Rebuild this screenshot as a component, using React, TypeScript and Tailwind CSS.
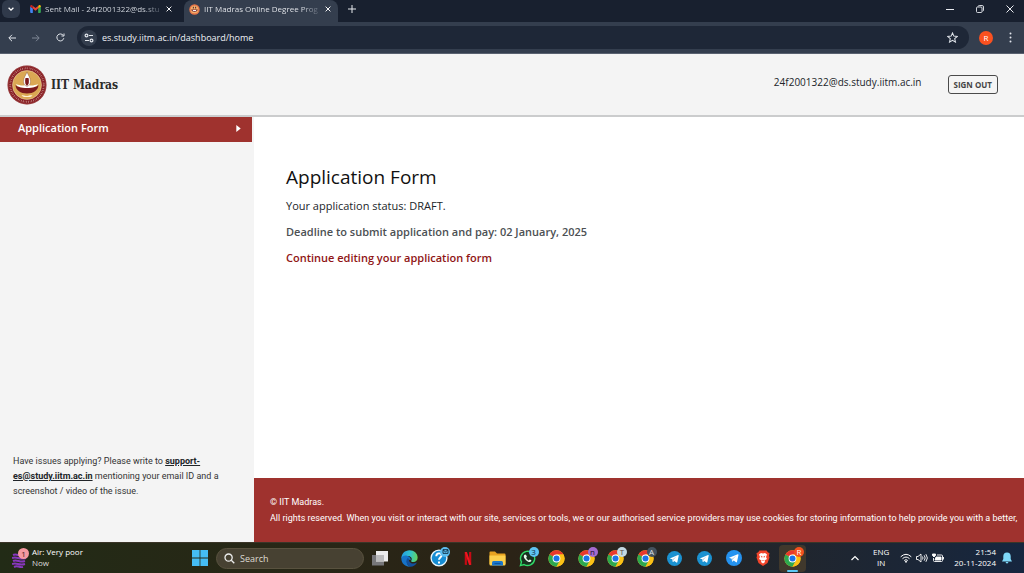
import React from "react";

function GmailIcon() {
  return (
    <svg viewBox="0 0 24 18" className="h-2 w-[11px] shrink-0" aria-hidden="true">
      <path fill="#4285f4" d="M0 3v13a2 2 0 0 0 2 2h4V8z" />
      <path fill="#34a853" d="M18 18h4a2 2 0 0 0 2-2V3l-6 5z" />
      <path fill="#fbbc04" d="M18 2v6l6-4V3c0-3-3-4-5-2z" />
      <path fill="#ea4335" d="M6 8V2l6 5 6-5v6l-6 5z" />
      <path fill="#c5221f" d="M0 3v1l6 4V2L5 1C3-1 0 0 0 3z" />
    </svg>
  );
}

function SealFavicon() {
  return (
    <svg viewBox="0 0 20 20" className="h-[11px] w-[11px] shrink-0" aria-hidden="true">
      <circle cx="10" cy="10" r="9.5" fill="#e8764a" />
      <circle cx="10" cy="10" r="7" fill="#f4b26a" />
      <path d="M4 10h12c-1 6-11 6-12 0z" fill="#6c2130" />
      <path d="M7 5h2v3H7zM11 5h2v3h-2z" fill="#5a3038" />
      <path d="M7 11h6v2H7z" fill="#fff" />
    </svg>
  );
}

function CloseIcon({ className }: { className: string }) {
  return (
    <svg viewBox="0 0 10 10" className={className} fill="none" stroke="currentColor" aria-hidden="true">
      <path d="M1 1l8 8M9 1L1 9" strokeWidth="1.6" />
    </svg>
  );
}

function IitSeal() {
  return (
    <svg viewBox="0 0 80 80" className="h-10 w-10 shrink-0" role="img" aria-label="IIT Madras seal">
      <circle cx="40" cy="40" r="39" fill="#861a20" />
      <circle cx="40" cy="40" r="38" fill="none" stroke="#c99a90" strokeWidth="0.6" />
      <circle cx="40" cy="40" r="33.5" fill="none" stroke="#e3c4bd" strokeWidth="4" strokeDasharray="1.6 1.8 1 2 2 2.1" opacity="0.6" />
      <circle cx="40" cy="40" r="29" fill="#dba854" stroke="#efdcb8" strokeWidth="1" />
      <path d="M17 40c2 2 5 4 9 4 9 2 19 2 28 0 4 0 7-2 9-4-1 11-10 17-23 17S18 51 17 40z" fill="#7c1a1d" />
      <path d="M18 38c7 3 14 4 18 2l4 2 4-2c4 2 11 1 18-2-2 6-12 8-22 8s-20-2-22-8z" fill="#fff" />
      <path d="M40 14c2 6 7 11 7 19 0 5-3 9-7 10-4-1-7-5-7-10 0-8 5-13 7-19z" fill="#fff" stroke="#7d4a32" strokeWidth="0.8" />
      <path d="M37 26h6c1 4 1 9 0 12l-3 4-3-4c-1-3-1-8 0-12z" fill="#7c1a1d" />
      <path d="M29 61c5-2 8 2 12 1s5-2 10-1c-3 4-7 3-11 3s-7 1-11-3z" fill="#fff3d6" />
    </svg>
  );
}

function ChromeIcon() {
  return (
    <svg viewBox="0 0 48 48" className="h-[17px] w-[17px]" aria-hidden="true">
      <circle cx="24" cy="24" r="23" fill="#fbc116" />
      <path d="M24 24L4.100 12.500A23 23 0 0 1 43.900 12.500H24z" fill="#e8392d" />
      <path d="M4.100 12.500A23 23 0 0 0 24 47l10-17.500L24 24z" fill="#2da84f" />
      <path d="M24 13h19.900A23 23 0 0 1 24 47l9.500-17z" fill="#fbc116" />
      <circle cx="24" cy="24" r="11" fill="#fff" />
      <circle cx="24" cy="24" r="8.500" fill="#1a73e8" />
    </svg>
  );
}

function TelegramIcon({ bright = false }: { bright?: boolean }) {
  return (
    <svg viewBox="0 0 24 24" className={bright ? "h-4 w-4" : "h-[15px] w-[15px]"} aria-hidden="true">
      <circle cx="12" cy="12" r="12" fill={bright ? "#2593f0" : "#1b92d1"} />
      <path d="M4.500 11.800l13.200-5.300c.7-.2 1.200.2 1 1.100l-2.200 10.200c-.2.800-.8 1-1.400.6l-3.500-2.600-1.700 1.600c-.4.400-.8.200-.8-.3l-.6-4-4-1.300z" fill="#fff" />
      <path d="M9 13l6.500-4.500-5.200 5.500-.8 3z" fill="#a9cbe3" />
    </svg>
  );
}

function EdgeIcon() {
  return (
    <svg viewBox="0 0 48 48" className="h-[17px] w-[17px]" aria-hidden="true">
      <defs>
        <linearGradient id="edge-top" x1="0" x2="1" y1="0.4" y2="0.5">
          <stop offset="0" stopColor="#249ce4" />
          <stop offset="0.55" stopColor="#32c3c9" />
          <stop offset="1" stopColor="#66d35b" />
        </linearGradient>
      </defs>
      <path d="M1 24C1 11 11 1 24 1s23 9 23 20c0 8-5 13-12 13-5 0-7-2-6-4 4-6-1-13-9-13C10 17 2 23 1 24z" fill="url(#edge-top)" />
      <path d="M1 24c1-6 9-10 16-8 8 2 12 8 10 13-8-5-12 1-10 8 1 5 5 9 9 10C12 48 1 38 1 24z" fill="#1673c8" />
      <path d="M20 22c-7 5-7 19 6 25 9 0 16-5 19-12-9 6-20 3-22-4-1-4-1-6-3-9z" fill="#114f9d" />
    </svg>
  );
}

function HelpIcon() {
  return (
    <svg viewBox="0 0 20 20" className="h-[18px] w-[18px]" aria-hidden="true">
      <circle cx="10" cy="10" r="8.800" fill="#168dd4" stroke="#e9f6fc" strokeWidth="1.500" />
      <path d="M7 8c0-4 6-4 6-1 0 2-3 2.500-3 5M10 14v2" fill="none" stroke="#fff" strokeWidth="2.200" />
    </svg>
  );
}

function MailGlyph() {
  return (
    <svg viewBox="0 0 10 8" className="h-[5px] w-[7px]" fill="none" stroke="#102c40" strokeWidth="1.400" aria-hidden="true">
      <path d="M1 1h8v6H1zM1 1.500l4 3 4-3" />
    </svg>
  );
}

function FolderIcon() {
  return (
    <svg viewBox="0 0 34 30" className="h-[15px] w-[17px]" aria-hidden="true">
      <path d="M1 3a2 2 0 0 1 2-2h9l4 4h15a2 2 0 0 1 2 2v19H1z" fill="#e8a321" />
      <path d="M1 9h32v18a2 2 0 0 1-2 2H3a2 2 0 0 1-2-2z" fill="#fcd04d" />
      <path d="M6 29v-6a3 3 0 0 1 3-3h16a3 3 0 0 1 3 3v6z" fill="#1b76ca" />
      <path d="M11 24h12v2H11z" fill="#0b549f" />
    </svg>
  );
}

function WhatsAppIcon() {
  return (
    <svg viewBox="0 0 24 24" className="h-[17px] w-[17px]" aria-hidden="true">
      <path d="M2 22l1.500-5.200A10 10 0 1 1 7.200 20.500z" fill="#18301e" stroke="#2fdc68" strokeWidth="2" />
      <path d="M8.500 6.500c-3 1.500-1.500 5 1 7.500 3 3 6.500 4 8 1.500.5-1-2-2.500-2.500-2l-1.200 1.200c-1.800-.7-3-2-3.800-3.700l1-1c.5-.6-1-3.500-2.500-3.500z" fill="#eafcef" />
    </svg>
  );
}

function BraveIcon() {
  return (
    <svg viewBox="0 0 28 32" className="h-4 w-[14px]" aria-hidden="true">
      <path d="M7 1h14l3 4 3 1-1 6 1 3-4 11-9 6-9-6L1 15l1-3-1-6 3-1z" fill="#f2452b" />
      <path d="M14 7l4-1 4 3-2 5 2 4-5 3 1 3-4 3-4-3 1-3-5-3 2-4-2-5 4-3z" fill="#fff" />
      <path d="M9 11l4 2-1 3zM19 11l-4 2 1 3zM12 20h4l-2 2z" fill="#f2452b" />
    </svg>
  );
}

function NetflixIcon() {
  return (
    <svg viewBox="0 0 14 24" className="h-[13px] w-2" aria-hidden="true">
      <path d="M1 0h4v24l-4-.5zM9 0h4v23.500L9 24z" fill="#c80a14" />
      <path d="M1 0h4l8 23.500L9 24z" fill="#ee1620" />
    </svg>
  );
}

function TaskViewIcon() {
  return (
    <svg viewBox="0 0 32 30" className="h-[15px] w-4" aria-hidden="true">
      <path d="M0 8h24v21H0z" fill="#77777a" />
      <path d="M8 0h24v21H8z" fill="#ededed" />
      <path d="M8 8h16v13H8z" fill="#bcbcbd" />
    </svg>
  );
}

type TaskbarApp = {
  name: string;
  icon: React.ReactNode;
  badge?: React.ReactNode;
  badgeClass?: string;
  active?: boolean;
};

const apps: TaskbarApp[] = [
  { name: "Task view", icon: <TaskViewIcon /> },
  { name: "Edge", icon: <EdgeIcon /> },
  { name: "Get Help", icon: <HelpIcon />, badge: <MailGlyph />, badgeClass: "bg-[#5bbdf0]" },
  { name: "Netflix", icon: <NetflixIcon /> },
  { name: "File Explorer", icon: <FolderIcon /> },
  { name: "WhatsApp", icon: <WhatsAppIcon />, badge: "3", badgeClass: "bg-[#5ec3f2] text-[#102c40]" },
  { name: "Chrome", icon: <ChromeIcon /> },
  { name: "Chrome, profile n", icon: <ChromeIcon />, badge: "n", badgeClass: "bg-[#a56bd0] text-[#24102f]" },
  { name: "Chrome, profile T", icon: <ChromeIcon />, badge: "T", badgeClass: "bg-[#c3d8e2] text-[#5b4639]" },
  { name: "Chrome, profile A", icon: <ChromeIcon />, badge: "A", badgeClass: "bg-[#45525e] text-[#dce3e8]" },
  { name: "Telegram", icon: <TelegramIcon /> },
  { name: "Telegram 2", icon: <TelegramIcon /> },
  { name: "Telegram 3", icon: <TelegramIcon bright /> },
  { name: "Brave", icon: <BraveIcon /> },
  { name: "Chrome, profile R", icon: <ChromeIcon />, badge: "R", badgeClass: "bg-[#f4511e] text-white", active: true },
];

function TabStrip() {
  return (
    <div className="flex h-[22px] items-stretch bg-[#18202f] text-[8px] text-[#dfe3ea]">
      <button aria-label="Search tabs" className="ml-[2px] flex h-[18px] w-[18px] items-center justify-center rounded-md bg-[#303a4b]">
        <svg viewBox="0 0 10 10" className="h-2 w-2" fill="none" stroke="#fff" strokeWidth="1.600" aria-hidden="true">
          <path d="M2 3.500l3 3 3-3" />
        </svg>
      </button>
      <div className="ml-2 flex w-[154px] items-center px-[2px] pb-1">
        <GmailIcon />
        <span className="ml-1 bg-gradient-to-r from-[#dfe3ea] from-85% to-[#4a5260] bg-clip-text whitespace-nowrap text-transparent">
          Sent Mail - 24f2001322@ds.stu
        </span>
        <button aria-label="Close Sent Mail tab" className="ml-auto pr-2 text-white">
          <CloseIcon className="h-[6px] w-[6px]" />
        </button>
      </div>
      <div className="ml-[2px] flex w-[154px] items-center rounded-t-lg bg-[#343e4e] pb-1 pl-[5px]">
        <SealFavicon />
        <span className="ml-1 bg-gradient-to-r from-[#f0f2f6] from-85% to-[#5d6674] bg-clip-text whitespace-nowrap text-transparent">
          IIT Madras Online Degree Prog
        </span>
        <button aria-label="Close IIT Madras tab" className="ml-auto pr-[7px] text-white">
          <CloseIcon className="h-[6px] w-[6px]" />
        </button>
      </div>
      <button aria-label="New tab" className="ml-[10px] pb-1">
        <svg viewBox="0 0 8 8" className="h-2 w-2" stroke="#e8ebf0" aria-hidden="true">
          <path d="M4 0v8M0 4h8" />
        </svg>
      </button>
      <div className="ml-auto flex items-center gap-[22px] pr-[10px] pb-1 text-[#e8ebf0]">
        <button aria-label="Minimize">
          <svg viewBox="0 0 8 8" className="h-2 w-2" stroke="currentColor" aria-hidden="true">
            <path d="M0 4.500h8" />
          </svg>
        </button>
        <button aria-label="Restore">
          <svg viewBox="0 0 8 8" className="h-2 w-2" fill="none" stroke="currentColor" strokeWidth="0.900" aria-hidden="true">
            <rect x="0.500" y="2" width="5.500" height="5.500" rx="1" />
            <path d="M2 1.500Q2.300.5 3.200.5h3Q7.500.5 7.500 2v3q0 1-.9 1.200" />
          </svg>
        </button>
        <button aria-label="Close window">
          <svg viewBox="0 0 8 8" className="h-2 w-2" stroke="currentColor" aria-hidden="true">
            <path d="M.5.5l7 7M7.500.5l-7 7" />
          </svg>
        </button>
      </div>
    </div>
  );
}

function AddressBar() {
  return (
    <div className="flex h-8 items-center border-b border-[#596170] bg-[#343e4e]">
      <button aria-label="Back" className="ml-2">
        <svg viewBox="0 0 8 8" className="h-2 w-2" fill="none" stroke="#e1e5eb" aria-hidden="true">
          <path d="M8 4H1M4 .8L.8 4 4 7.200" />
        </svg>
      </button>
      <button aria-label="Forward" className="ml-4">
        <svg viewBox="0 0 8 8" className="h-2 w-2" fill="none" stroke="#7e8795" aria-hidden="true">
          <path d="M0 4h7M4 .8L7.200 4 4 7.200" />
        </svg>
      </button>
      <button aria-label="Reload" className="ml-4">
        <svg viewBox="0 0 9 9" className="h-[9px] w-[9px]" fill="none" stroke="#e1e5eb" aria-hidden="true">
          <path d="M7.800 5.200A3.500 3.500 0 1 1 7.300 2.500M8 .5V3H5.500" />
        </svg>
      </button>
      <div className="ml-3 flex h-[23px] flex-1 items-center rounded-full bg-[#1e2737] pr-[11px] pl-1">
        <button aria-label="Site information" className="flex h-4 w-4 items-center justify-center rounded-full bg-[#343e4e]">
          <svg viewBox="0 0 10 10" className="h-[10px] w-[10px]" fill="none" stroke="#e1e5eb" strokeWidth="1.200" aria-hidden="true">
            <circle cx="2.500" cy="2.500" r="1.400" />
            <path d="M5 2.500h4M1 7.500h4" />
            <circle cx="7.500" cy="7.500" r="1.400" />
          </svg>
        </button>
        <input
          aria-label="Address"
          defaultValue="es.study.iitm.ac.in/dashboard/home"
          className="ml-[5px] min-w-0 flex-1 bg-transparent text-[9px] leading-4 text-[#eef1f5] outline-none"
        />
        <button aria-label="Bookmark this page">
          <svg viewBox="0 0 24 24" className="h-[11px] w-[11px]" fill="none" stroke="#e1e5eb" strokeWidth="2.200" aria-hidden="true">
            <path d="M12 2l3 7 7.500.6-5.700 5 1.700 7.400-6.500-4-6.500 4 1.700-7.400-5.700-5L9 9z" />
          </svg>
        </button>
      </div>
      <button aria-label="Profile R" className="ml-[10px] flex h-[14px] w-[14px] items-center justify-center rounded-full bg-[#fa5120] text-[8px] leading-none text-white">
        R
      </button>
      <button aria-label="Chrome menu" className="mr-3 ml-4">
        <svg viewBox="0 0 3 11" className="h-[11px] w-[3px]" fill="#e1e5eb" aria-hidden="true">
          <circle cx="1.500" cy="1.500" r="1" />
          <circle cx="1.500" cy="5.500" r="1" />
          <circle cx="1.500" cy="9.500" r="1" />
        </svg>
      </button>
    </div>
  );
}

function SiteHeader() {
  return (
    <header className="flex h-[63px] items-center border-b-2 border-[#cbcccd] bg-[#f4f4f4] pr-[26px] pl-[7px]">
      <IitSeal />
      <span className="ml-1 font-['Roboto_Slab','DejaVu_Serif_Condensed','DejaVu_Serif',serif] text-xs font-bold whitespace-nowrap text-[#2b2b2b]">
        IIT Madras
      </span>
      <span className="ml-auto pb-1 text-[10px] text-[#212529]">24f2001322@ds.study.iitm.ac.in</span>
      <button className="ml-[26px] h-[19px] rounded-[3px] border border-[#4a4a4a] px-[5px] text-[8px] font-bold text-[#444]">
        SIGN OUT
      </button>
    </header>
  );
}

function Sidebar() {
  return (
    <aside className="flex w-[254px] shrink-0 flex-col bg-[#f4f4f4]">
      <nav className="pr-[2px]">
        <a href="#application" className="flex h-[25px] items-center bg-[#9f322e] pr-[11px] pb-[2px] pl-[18px] text-[11px] font-semibold text-white">
          Application Form
          <svg viewBox="0 0 5 8" className="ml-auto h-[7px] w-[5px]" fill="#fff" aria-hidden="true">
            <path d="M0 0l5 4-5 4z" />
          </svg>
        </a>
      </nav>
      <p className="mt-auto mb-[43px] pr-7 pl-[13px] font-['Roboto','Open_Sans',sans-serif] text-[9px] leading-[15px] text-[#333]">
        Have issues applying? Please write to{" "}
        <a href="mailto:support-es@study.iitm.ac.in" className="font-bold text-[#212529] underline">
          support-es@study.iitm.ac.in
        </a>{" "}
        mentioning your email ID and a screenshot / video of the issue.
      </p>
    </aside>
  );
}

function Taskbar() {
  return (
    <div className="flex h-[31px] items-center border-t border-[#3b3528] bg-linear-to-r from-[#222b16] via-[#2b2316] via-50% to-[#16263f] text-[8px] leading-[11px] text-white">
      <div className="flex w-[186px] shrink-0 items-center">
        <div className="relative ml-3 h-5 w-4">
          <svg viewBox="0 0 16 20" className="h-5 w-4" fill="none" stroke="#8737bd" strokeWidth="2" aria-hidden="true">
            <path d="M1 7c4-2 6 2 13 0M0 10c5-2 7 2 14 0M1 13c4-2 7 2 12 0M0 16c5-2 7 2 13 0M2 19c4-2 6 1 9 0" />
          </svg>
          <span className="absolute top-0 left-[6px] flex h-[11px] w-[11px] items-center justify-center rounded-full bg-[#f79aa0] text-[8px] leading-none text-[#431b22]">
            1
          </span>
        </div>
        <div className="ml-1 pb-[2px]">
          <div>Air: Very poor</div>
          <div className="text-[#dcdcdc]">Now</div>
        </div>
      </div>
      <button aria-label="Start" className="flex w-[27px] shrink-0 justify-center">
        <svg viewBox="0 0 16 16" className="h-4 w-4" fill="#45bdf5" aria-hidden="true">
          <path d="M0 0h7.600v7.600H0zM8.400 0H16v7.600H8.400zM0 8.400h7.600V16H0zM8.400 8.400H16V16H8.400z" />
        </svg>
      </button>
      <label className="ml-[3px] flex h-[21px] w-[148px] shrink-0 items-center rounded-full border border-[#59523f] bg-[#474132] pl-[7px]">
        <svg viewBox="0 0 11 11" className="h-[11px] w-[11px] shrink-0" fill="none" stroke="#ececec" strokeWidth="1.300" aria-hidden="true">
          <circle cx="4.600" cy="4.600" r="3.600" />
          <path d="M7.300 7.300l3 3" />
        </svg>
        <input aria-label="Search" placeholder="Search" className="ml-[5px] w-24 bg-transparent text-[9px] outline-none placeholder:text-[#dedbd2]" />
      </label>
      <div className="ml-[2px] flex w-[440px] shrink-0 justify-between">
        {apps.map((app) => (
          <button
            key={app.name}
            aria-label={app.name}
            className={
              app.active
                ? "relative flex h-[27px] w-[27px] items-center justify-center rounded bg-[#40382c]"
                : "relative flex h-[27px] w-[27px] items-center justify-center"
            }
          >
            {app.icon}
            {app.badge && (
              <span className={`absolute top-[2px] right-[2px] flex h-[10px] w-[10px] items-center justify-center rounded-full text-[8px] leading-none ${app.badgeClass}`}>
                {app.badge}
              </span>
            )}
            {app.active && <span className="absolute bottom-0 left-2 h-[2px] w-[11px] rounded-full bg-[#5cc8f5]" />}
          </button>
        ))}
      </div>
      <div className="ml-auto flex items-center pr-3">
        <svg viewBox="0 0 8 8" className="h-2 w-2" fill="none" stroke="#fff" strokeWidth="1.200" aria-hidden="true">
          <path d="M.5 6L4 2.500 7.500 6" />
        </svg>
        <div className="ml-[14px] pb-[2px] text-center">
          <div>ENG</div>
          <div>IN</div>
        </div>
        <svg viewBox="0 0 12 10" className="ml-[11px] h-[10px] w-3" fill="none" stroke="#fff" aria-hidden="true">
          <path d="M.7 3.800q5.300-5 10.600 0M2.500 5.700q3.500-3.300 7 0M4.200 7.500q1.800-1.700 3.600 0" />
          <circle cx="6" cy="8.700" r="0.600" fill="#fff" />
        </svg>
        <svg viewBox="0 0 12 10" className="ml-1 h-[10px] w-3" fill="none" stroke="#fff" strokeWidth="0.900" aria-hidden="true">
          <path d="M.5 3.500H2L5 1v8L2 6.500H.5zM6.500 3.500q1 1.500 0 3M8.200 2.300q2 2.700 0 5.400M9.900 1.200q3 3.800 0 7.600" />
        </svg>
        <svg viewBox="0 0 12 10" className="ml-1 h-[10px] w-3" fill="none" stroke="#fff" strokeWidth="0.900" aria-hidden="true">
          <path d="M5 2h4.500q1 0 1 1v4.500q0 1-1 1H2.500q-1 0-1-1V5M11.500 4v2.500" />
          <path d="M4 4h5v3H3zM.5 1h3v1.500L2 4 .5 2.500z" fill="#fff" />
        </svg>
        <div className="ml-[10px] pb-[2px] text-right">
          <div>21:54</div>
          <div>20-11-2024</div>
        </div>
        <svg viewBox="0 0 10 12" className="ml-[6px] h-3 w-[10px]" fill="#7fd8f8" aria-hidden="true">
          <path d="M5 .5c2.500 0 3.700 1.700 3.700 3.800V7L10 9.500H0L1.300 7V4.300C1.300 2.200 2.500.5 5 .5zM3.500 10h3q-1.500 3-3 0z" />
        </svg>
      </div>
    </div>
  );
}

export default function App() {
  return (
    <div className="flex min-h-screen flex-col overflow-hidden bg-white font-['Open_Sans','Noto_Sans',sans-serif]">
      <TabStrip />
      <AddressBar />
      <SiteHeader />
      <div className="flex flex-1">
        <Sidebar />
        <div className="flex min-w-0 flex-1 flex-col">
          <main className="flex-1 px-8 pt-12">
            <h1 className="text-[19px] leading-6 text-[#111]">Application Form</h1>
            <p className="mt-2 text-[11px] leading-[18px] text-[#212529]">
              Your application status: DRAFT.
            </p>
            <p className="mt-2 text-[11px] leading-[18px] font-semibold text-[#4c5053]">
              Deadline to submit application and pay: 02 January, 2025
            </p>
            <a href="#continue" className="mt-2 block text-[11px] leading-[18px] font-semibold text-[#8f1515]">
              Continue editing your application form
            </a>
          </main>
          <footer className="overflow-hidden bg-[#9f322e] py-4 pl-4 font-['Roboto','Open_Sans',sans-serif] text-[9px] leading-4 whitespace-nowrap text-white">
            <p>© IIT Madras.</p>
            <p>
              All rights reserved. When you visit or interact with our site, services or tools, we or our authorised service providers may use cookies for storing information to help provide you with a better,
            </p>
          </footer>
        </div>
      </div>
      <Taskbar />
    </div>
  );
}
